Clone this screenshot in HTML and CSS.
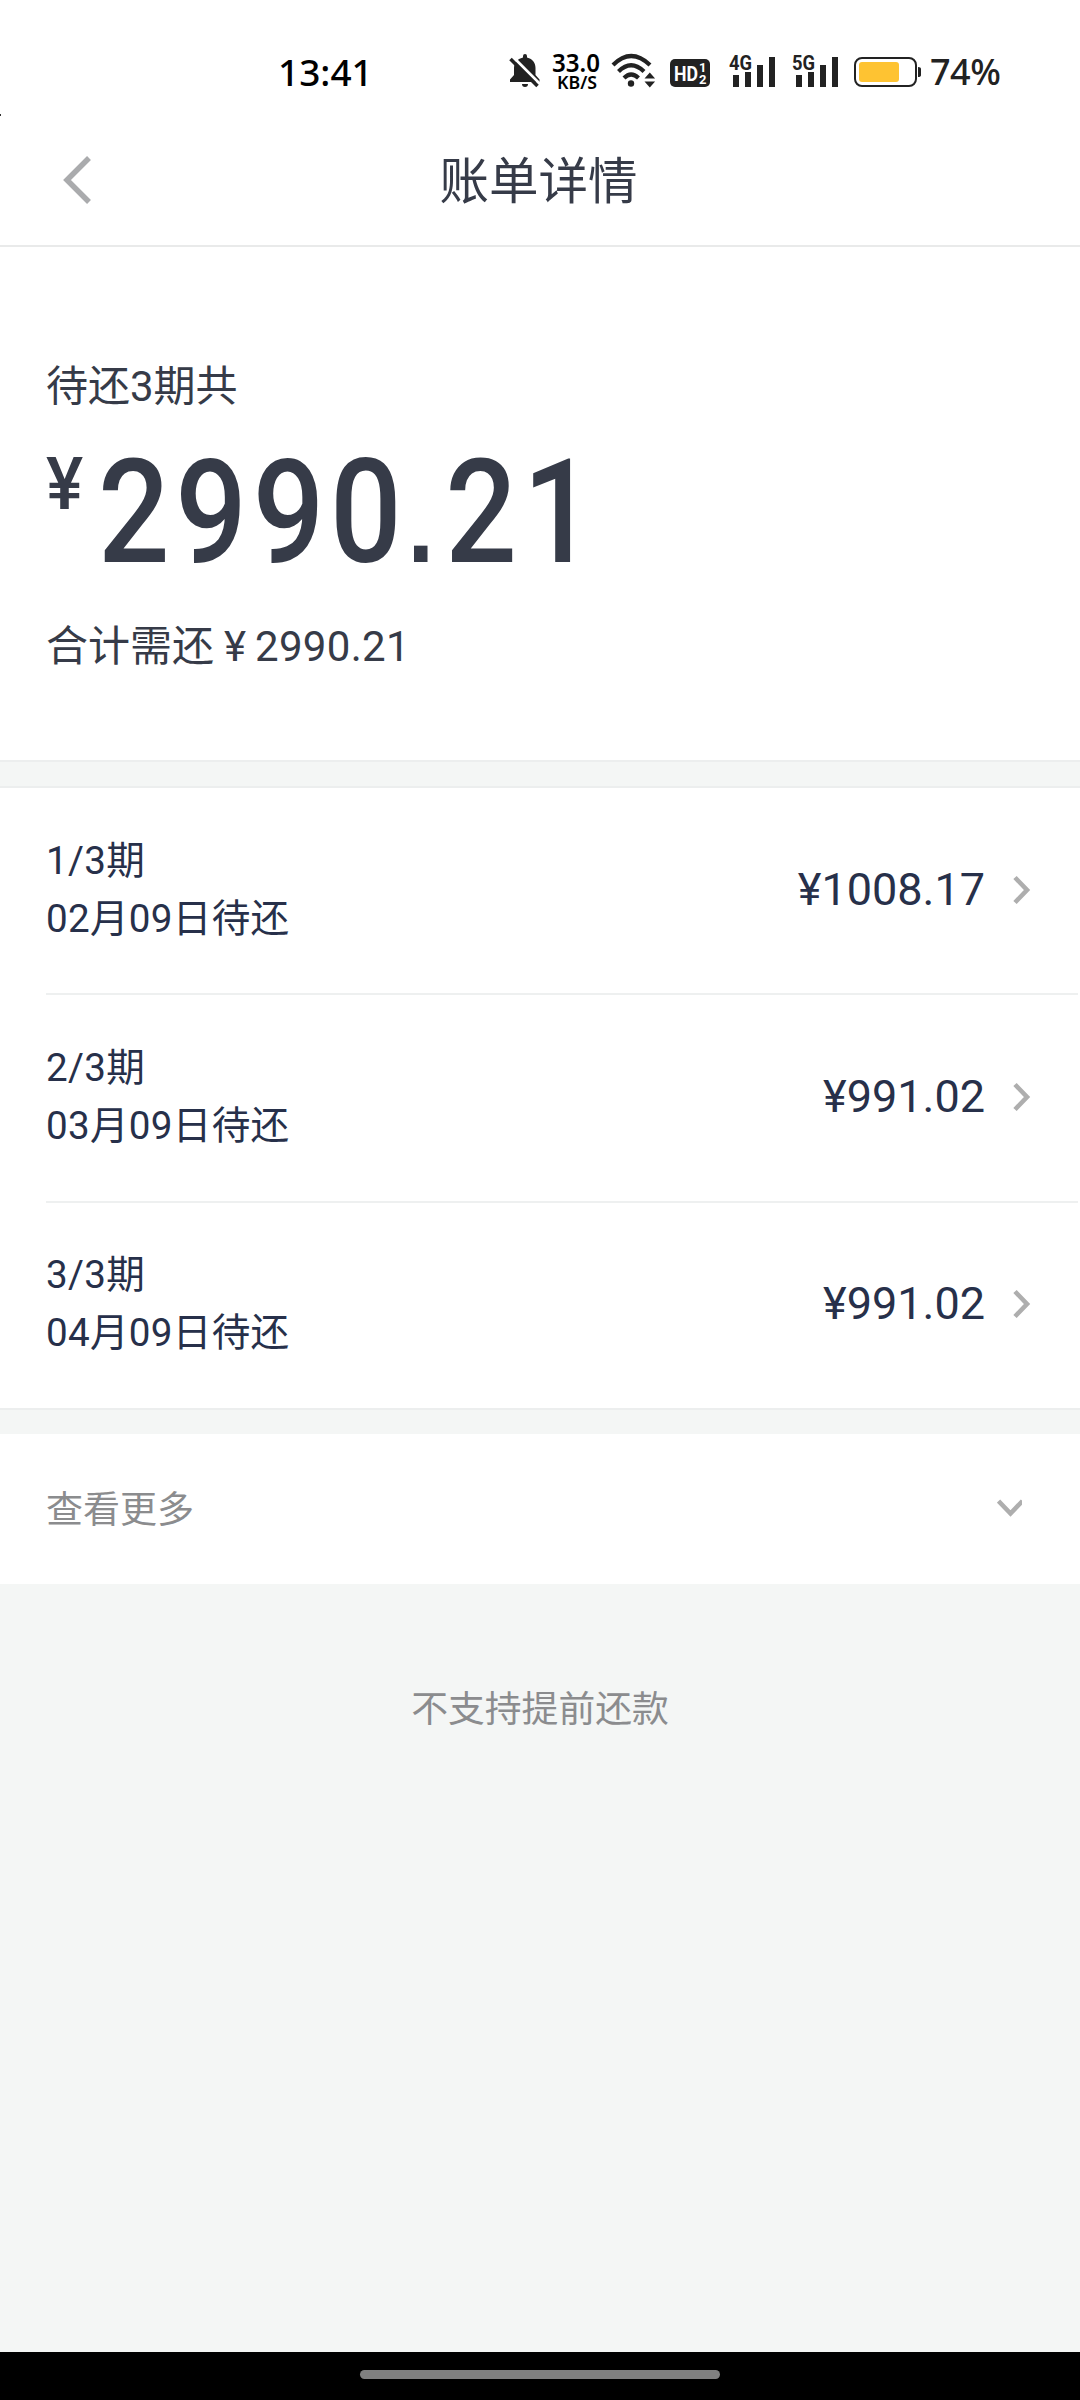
FILE: index.html
```html
<!DOCTYPE html>
<html lang="zh-CN">
<head>
<meta charset="utf-8">
<title>账单详情</title>
<link rel="stylesheet" href="styles.css">
</head>
<body>
<header class="status">
  <span class="time">13:41</span>
  <svg class="bell" width="32" height="36" viewBox="0 0 32 36">
    <path d="M14 3.500V2a2 2 0 0 1 4 0v1.500C24 5 26.500 9 26.500 14v7l4 4.500V28H1v-2.500L5 21v-7C5 9 8 5 14 3.500zM13 30h6a3 3 0 0 1-6 0z" fill="#222"/>
    <path d="M4 3l28 28" stroke="#fff" stroke-width="3"/>
    <path d="M1.500 5l27 27" stroke="#222" stroke-width="3.500"/>
  </svg>
  <svg class="speed" width="50" height="40" viewBox="0 0 50 40">
    <text x="0" y="19" font-size="25" textLength="48" lengthAdjust="spacingAndGlyphs">33.0</text>
    <text x="5" y="36" font-size="18" textLength="40" lengthAdjust="spacingAndGlyphs">KB/S</text>
  </svg>
  <svg class="wifi" width="46" height="36" viewBox="0 0 46 36" fill="none" stroke="#222" stroke-width="4.200">
    <path d="M2 12Q20-6 39 12M7.500 18.500Q20 6 33 18.500M13 25Q20 18 27.500 25"/>
    <circle cx="20" cy="30.500" r="3.200" fill="#222" stroke="none"/>
    <path d="M33.500 25.500l5.300-6 5.300 6zM33.500 28.500l5.300 6 5.300-6z" fill="#222" stroke="none"/>
  </svg>
  <svg class="hd" width="40" height="28" viewBox="0 0 40 28">
    <rect width="40" height="28" rx="5" fill="#222"/>
    <g class="tag" fill="#fff"><text x="4" y="22" font-size="21" textLength="24" lengthAdjust="spacingAndGlyphs">HD</text>
    <text x="29" y="13" font-size="13">1</text><text x="29" y="25" font-size="13">2</text></g>
  </svg>
  <svg class="signal" width="48" height="38" viewBox="0 -4 48 38" fill="#222">
    <text class="tag" x="0" y="15.500" font-size="20" textLength="23" lengthAdjust="spacingAndGlyphs">4G</text>
    <path d="M4 21h6v12H4zM16 18h6v15h-6zM28 11h6v22h-6zM40 3h6v30h-6z"/>
  </svg>
  <svg class="signal second" width="48" height="38" viewBox="0 -4 48 38" fill="#222">
    <text class="tag" x="0" y="15.500" font-size="20" textLength="23" lengthAdjust="spacingAndGlyphs">5G</text>
    <path d="M4 21h6v12H4zM16 18h6v15h-6zM28 11h6v22h-6zM40 3h6v30h-6z"/>
  </svg>
  <svg class="battery" width="68" height="30" viewBox="0 0 68 30">
    <rect x="1" y="1" width="61" height="28" rx="7" fill="#fff" stroke="#222" stroke-width="2"/>
    <rect x="5" y="5" width="40" height="20" rx="3" fill="#fec332"/>
    <path d="M64 10q3 0 3 2v6q0 2-3 2z" fill="#222"/>
  </svg>
  <span class="percent">74%</span>
</header>
<nav class="nav">
  <svg class="back" width="30" height="48" viewBox="0 0 30 48"><path d="M27 2L5 24l22 22" fill="none" stroke="#aaabad" stroke-width="5.500"/></svg>
  <h1>账单详情</h1>
</nav>
<section class="summary">
  <p class="label">待还3期共</p>
  <div class="total"><span class="yen">¥</span><span class="amount">2990<i>.</i>21</span></div>
  <p class="due"><span>合计需还</span><span class="mini-yen">¥</span><span class="sum">2990.21</span></p>
</section>
<section class="list">
  <div class="row"><div class="term">1/3期<br>02月09日待还</div><div class="price">¥1008.17</div><svg width="18" height="30" viewBox="0 0 18 30"><path d="M2 2.500l12 12.500L2 27.500"/></svg></div>
  <div class="row"><div class="term">2/3期<br>03月09日待还</div><div class="price">¥991.02</div><svg width="18" height="30" viewBox="0 0 18 30"><path d="M2 2.500l12 12.500L2 27.500"/></svg></div>
  <div class="row"><div class="term">3/3期<br>04月09日待还</div><div class="price">¥991.02</div><svg width="18" height="30" viewBox="0 0 18 30"><path d="M2 2.500l12 12.500L2 27.500"/></svg></div>
</section>
<section class="more"><span>查看更多</span><svg width="25" height="18" viewBox="0 0 25 18"><path d="M1.500 2l12 12.500 12-12.500"/></svg></section>
<p class="note">不支持提前还款</p>
<footer class="gesture"><div class="pill"></div></footer>
</body>
</html>
```
FILE: styles.css
```css
* { box-sizing: border-box; }
body {
  margin: 0;
  width: 1080px;
  height: 2400px;
  display: flex;
  flex-direction: column;
  background: #f4f6f5;
  color: #363b48;
  font-family: Roboto, "Noto Sans CJK SC", sans-serif;
  overflow: hidden;
}
p, h1 { margin: 0; font-weight: 400; }
svg { flex: none; display: block; }

/* system status bar */
.status {
  position: relative;
  height: 115px;
  padding-left: 278px;
  display: flex;
  align-items: flex-start;
  background: #fff;
  color: #000;
  font-family: "Noto Sans", sans-serif;
}
.status::after {
  content: "";
  position: absolute;
  left: 0;
  top: 114px;
  width: 1px;
  height: 2px;
  background: #333;
}
.time { width: 231px; padding-top: 47px; font-size: 37px; line-height: 50px; font-weight: 500; white-space: nowrap; }
.bell { margin-top: 54px; }
.speed { margin: 53px 0 0 11px; font-weight: 600; }
.wifi { margin: 53px 0 0 9px; }
.hd { margin: 59px 0 0 13px; }
.tag { font-family: Roboto, sans-serif; font-weight: 700; }
.signal { margin: 50px 0 0 19px; }
.signal.second { margin-left: 15px; }
.battery { margin: 57px 0 0 14px; }
.percent { margin: 47px 0 0 8px; color: #222; font-size: 36px; line-height: 50px; font-weight: 500; letter-spacing: -0.5px; }

/* page header */
.nav {
  height: 132px;
  padding-left: 62px;
  display: grid;
  grid-template-columns: 30px 1fr 95px;
  background: #fff;
  border-bottom: 2px solid #e9eaea;
}
.back { margin-top: 41px; }
.nav h1 { padding-top: 32px; font-size: 49.500px; line-height: 70px; text-align: center; }

/* outstanding balance */
.summary { height: 515px; padding: 110px 0 0 46px; background: #fff; border-bottom: 2px solid #eceeee; }
.label { height: 60px; font-size: 42px; line-height: 60px; }
.total { height: 150px; margin-top: 10px; display: flex; align-items: flex-start; font-weight: 500; }
.yen { width: 52px; padding-top: 15px; font-size: 73px; line-height: 84px; transform: scaleX(0.96); transform-origin: left; }
.amount { font-size: 145px; line-height: 170px; letter-spacing: 6.500px; transform: scaleX(0.87); transform-origin: left; }
.amount i { font: 700 110px/1 "Liberation Sans", sans-serif; letter-spacing: 13px; }
.due { height: 60px; margin-top: 40px; display: flex; font-size: 42px; line-height: 60px; }
.mini-yen { width: 31px; margin-left: 10px; }
.sum { letter-spacing: 0.3px; }

/* instalments */
.list { margin-top: 24px; background: #fff; border-top: 2px solid #eceeee; border-bottom: 2px solid #eceeee; color: #27304a; }
.row {
  height: 208px;
  margin: 0 2px 0 46px;
  padding: 0 47px 3px 0;
  display: flex;
  align-items: center;
  border-bottom: 2px solid #eef0f0;
}
.row:first-child { height: 207px; padding-bottom: 2px; }
.row:last-child { height: 205px; border-bottom: 0; }
.term { flex: 1; font-size: 38.600px; line-height: 58px; letter-spacing: 0.300px; }
.price { margin-right: 28px; font-size: 45px; line-height: 60px; }
.row path, .more path { fill: none; stroke: #aeaeae; stroke-width: 4.600; }

.more { height: 150px; margin-top: 24px; padding: 0 58px 2px 46px; display: flex; align-items: center; justify-content: space-between; background: #fff; color: #8b8c8e; font-size: 37px; }
.more span { padding-bottom: 3px; }
.note { margin-top: 98px; text-align: center; color: #8b8c8e; font-size: 36.800px; line-height: 56px; }

.gesture { height: 48px; margin-top: auto; padding-top: 18px; background: #000; }
.pill { width: 360px; height: 9px; margin: 0 auto; border-radius: 5px; background: #808080; }
```
